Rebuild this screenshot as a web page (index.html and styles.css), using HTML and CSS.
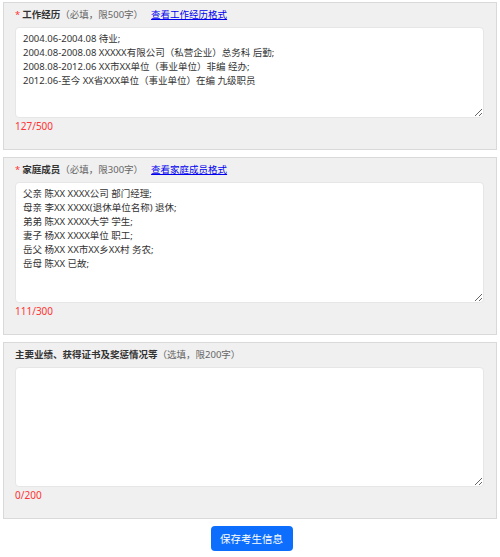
FILE: index.html
```html
<!DOCTYPE html>
<html lang="zh-CN">
<head>
<meta charset="utf-8">
<title>考生信息</title>
<link rel="stylesheet" href="styles.css">
</head>
<body>
<div class="page">
  <section class="panel">
    <div class="label"><span class="req">*</span><span class="name">工作经历</span><span class="hint">（必填，限500字）</span><a class="fmt" href="#">查看工作经历格式</a></div>
    <textarea class="box box-short">2004.06-2004.08 待业;
2004.08-2008.08 XXXXX有限公司（私营企业）总务科 后勤;
2008.08-2012.06 XX市XX单位（事业单位）非编 经办;
2012.06-至今 XX省XXX单位（事业单位）在编 九级职员</textarea>
    <div class="count">127/500</div>
  </section>
  <section class="panel">
    <div class="label"><span class="req">*</span><span class="name">家庭成员</span><span class="hint">（必填，限300字）</span><a class="fmt" href="#">查看家庭成员格式</a></div>
    <textarea class="box box-tall">父亲 陈XX XXXX公司 部门经理;
母亲 李XX XXXX(退休单位名称) 退休;
弟弟 陈XX XXXX大学 学生;
妻子 杨XX XXXX单位 职工;
岳父 杨XX XX市XX乡XX村 务农;
岳母 陈XX 已故;</textarea>
    <div class="count">111/300</div>
  </section>
  <section class="panel">
    <div class="label"><span class="name">主要业绩、获得证书及奖惩情况等</span><span class="hint">（选填，限200字）</span></div>
    <textarea class="box box-last"></textarea>
    <div class="count">0/200</div>
  </section>
  <div class="actions">
    <button class="save" type="button">保存考生信息</button>
  </div>
</div>
</body>
</html>
```
FILE: styles.css
```css
* { box-sizing: border-box; }
body {
  margin: 0;
  background: #fff;
  font-family: "Noto Sans", "Noto Sans CJK SC", sans-serif;
  color: #333;
}
.page {
  padding: 2px 3px 0 3px;
  display: flex;
  flex-direction: column;
  gap: 7px;
}
.panel {
  background: #f0f0f0;
  border: 1px solid #d9d9d9;
  padding: 4px 12px 15px 11px;
  display: flex;
  flex-direction: column;
}
.label {
  height: 16px;
  line-height: 16px;
  font-size: 9.5px;
  margin-bottom: 4px;
  white-space: nowrap;
}
.req {
  color: #f33;
  margin-right: 2px;
}
.name {
  font-weight: bold;
  color: #333;
}
.hint {
  color: #666;
  margin-right: 8px;
}
.fmt {
  color: #0000ee;
  text-decoration: underline;
}
.box {
  display: block;
  width: 100%;
  margin: 0;
  border: 1px solid #e6e6e6;
  border-radius: 4px;
  background: #fff;
  padding: 4px 7px;
  font-family: "Noto Sans", "Noto Sans CJK SC", sans-serif;
  font-size: 9.5px;
  line-height: 14px;
  color: #333;
  resize: vertical;
  outline: none;
}
.box-short { height: 91px; }
.box-tall { height: 121px; }
.box-last { height: 120px; }
.count {
  height: 16px;
  line-height: 16px;
  font-size: 10px;
  color: #f33;
}
.actions {
  display: flex;
  justify-content: center;
  padding-left: 3px;
}
.save {
  width: 82px;
  height: 25px;
  border: none;
  border-radius: 4px;
  background: #0d6efd;
  color: #fff;
  font-family: "Noto Sans CJK SC", sans-serif;
  font-size: 10.5px;
  padding: 0;
  cursor: pointer;
}
```
